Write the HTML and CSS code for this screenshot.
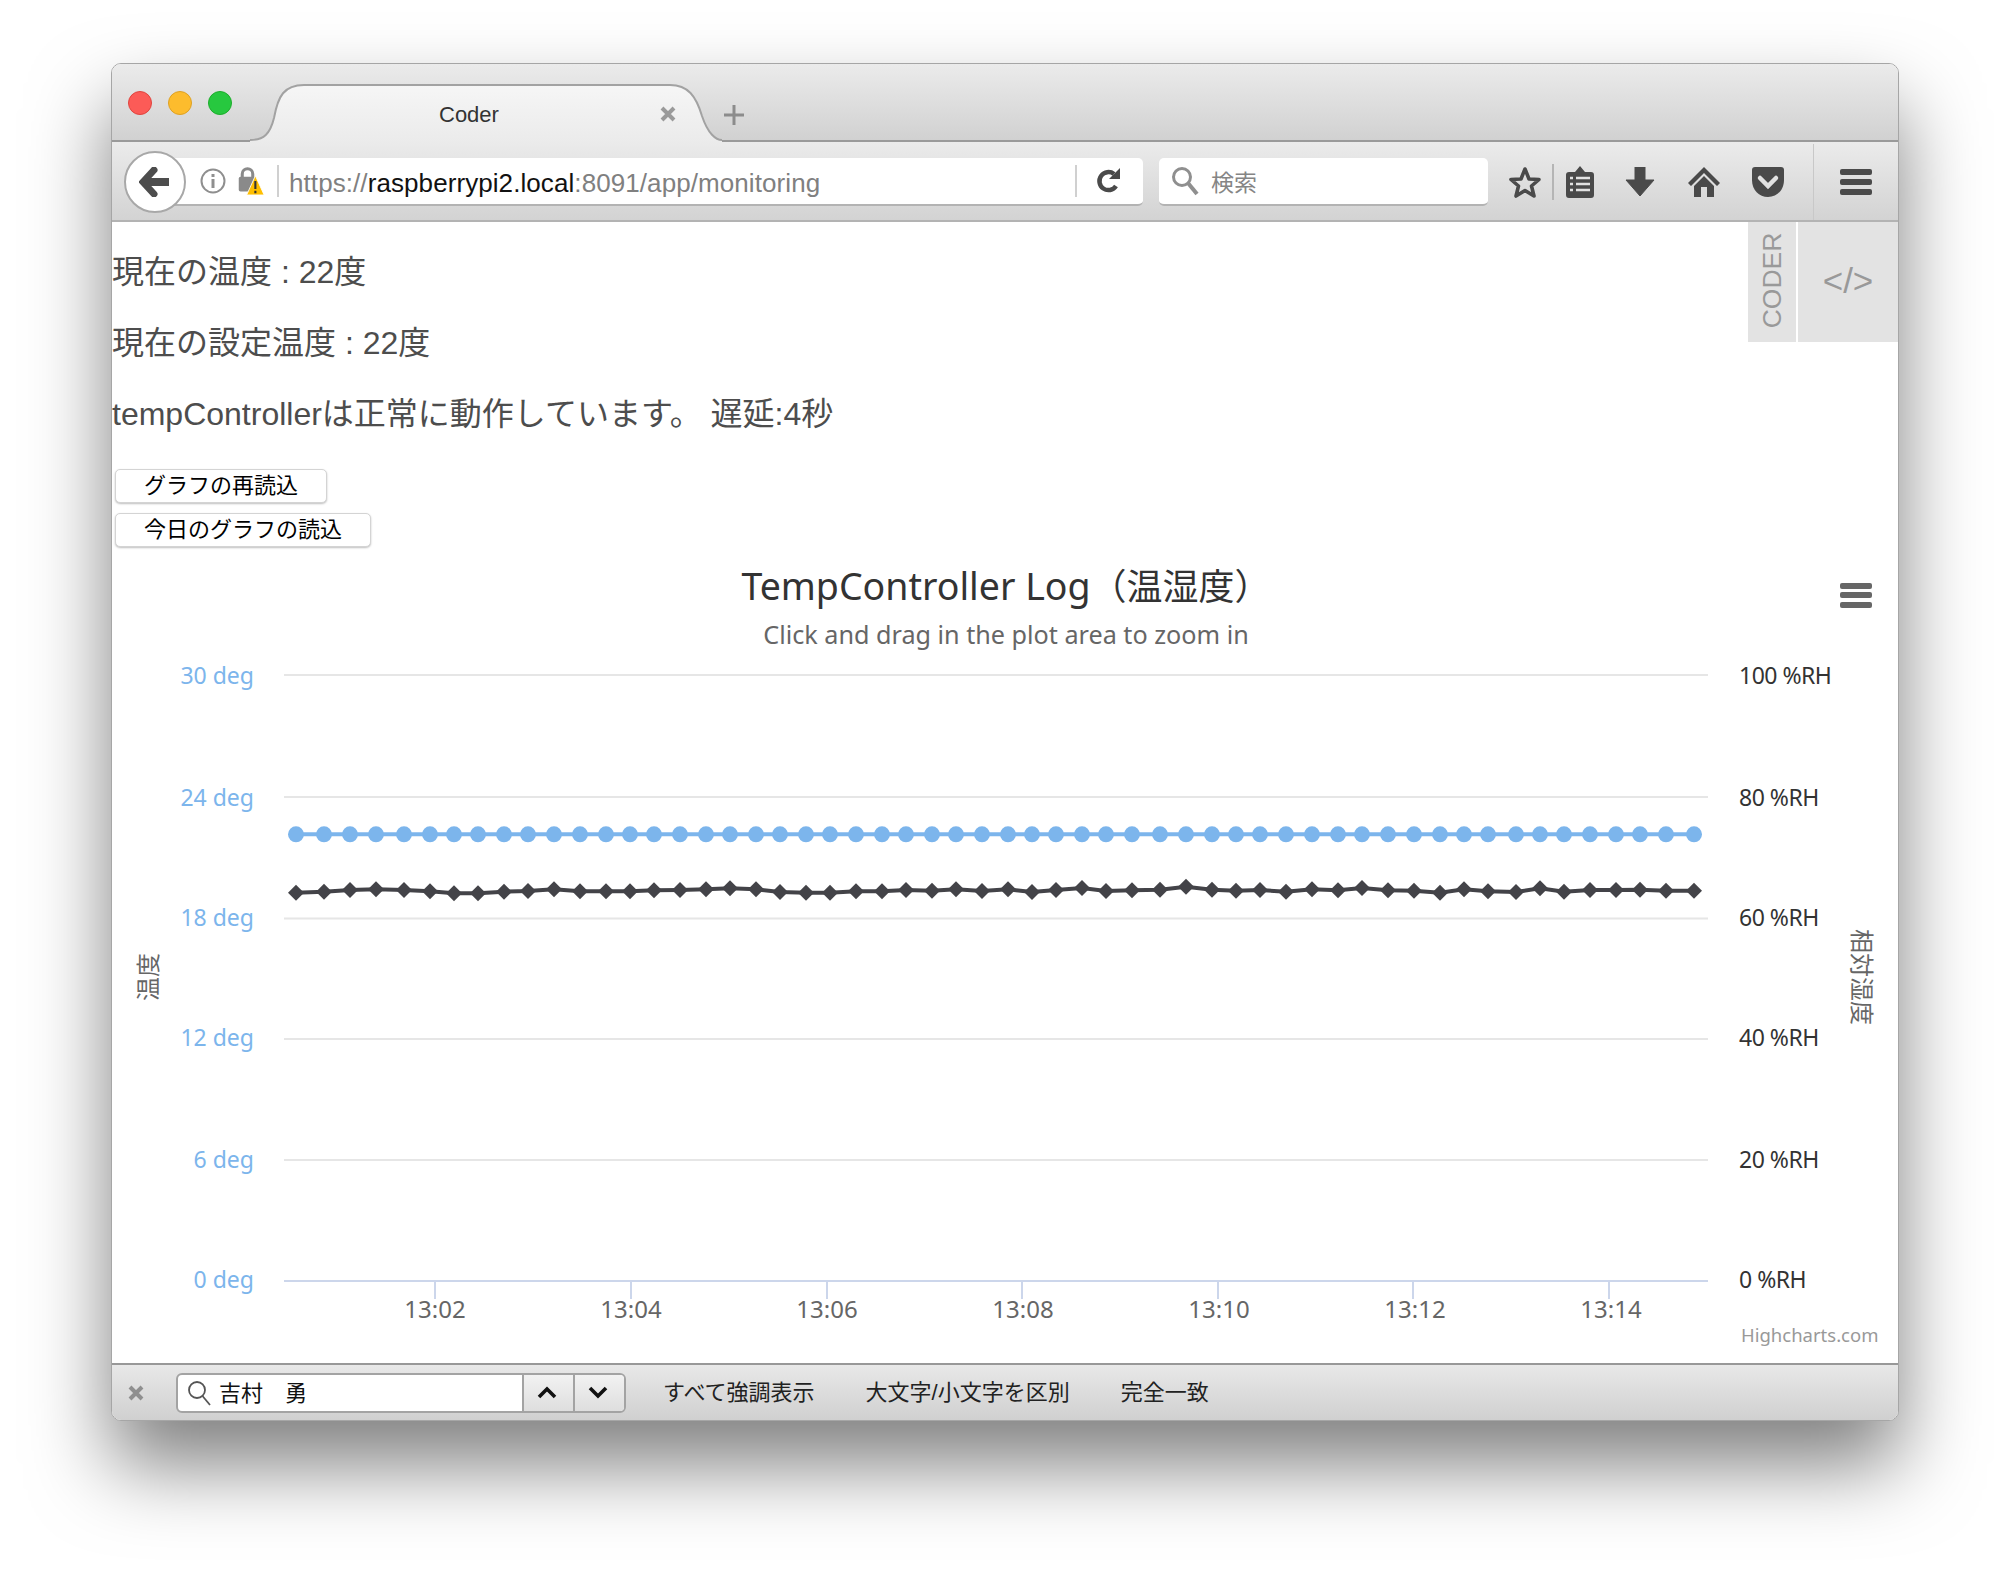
FILE: index.html
```html
<!DOCTYPE html>
<html lang="ja">
<head>
    <meta charset="UTF-8">
    <meta name="viewport" content="width=device-width, initial-scale=1.0">
    <title>Coder</title>
    <link rel="stylesheet" href="styles.css">
</head>
<body>
    <div class="window">
        <!-- Tab strip -->
        <div class="tabstrip">
            <div class="lights">
                <span class="light red"></span>
                <span class="light yellow"></span>
                <span class="light green"></span>
            </div>
            <div class="tab">
                <svg class="tab-shape" width="472" height="58" viewBox="0 0 472 58">
                    <defs>
                        <linearGradient id="tabFill" x1="0" y1="0" x2="0" y2="1">
                            <stop offset="0" stop-color="#f6f6f6"/>
                            <stop offset="1" stop-color="#ebebeb"/>
                        </linearGradient>
                    </defs>
                    <path d="M0 56 C14 56 20 50 24 34 C28 12 34 1 54 1 L420 1 C438 1 446 12 452 32 C458 50 466 56 472 56 L472 58 L0 58 Z" fill="url(#tabFill)"/>
                    <path d="M0 56 C14 56 20 50 24 34 C28 12 34 1 54 1 L420 1 C438 1 446 12 452 32 C458 50 466 56 472 56" fill="none" stroke="#a2a2a2" stroke-width="2"/>
                </svg>
                <span class="tab-title">Coder</span>
                <svg class="tab-close" width="16" height="16" viewBox="0 0 16 16">
                    <path d="M2 2 L14 14 M14 2 L2 14" stroke="#9a9a9a" stroke-width="4"/>
                </svg>
            </div>
            <svg class="new-tab" width="20" height="20" viewBox="0 0 20 20">
                <path d="M10 0 V20 M0 10 H20" stroke="#8c8c8c" stroke-width="3"/>
            </svg>
        </div>

        <!-- Navigation toolbar -->
        <div class="toolbar">
            <div class="back-button">
                <svg width="32" height="30" viewBox="0 0 32 30">
                    <path d="M15 3 L4 15 L15 27" fill="none" stroke="#4d4d4d" stroke-width="7" stroke-linecap="round"/>
                    <path d="M7 15 H30" stroke="#4d4d4d" stroke-width="8"/>
                </svg>
            </div>
            <div class="urlbar">
                <svg class="url-info" width="26" height="26" viewBox="0 0 26 26">
                    <circle cx="13" cy="13" r="11.5" fill="none" stroke="#8f8f8f" stroke-width="2"/>
                    <rect x="11.5" y="11" width="3" height="9" fill="#8f8f8f"/>
                    <rect x="11.5" y="6" width="3" height="3" fill="#8f8f8f"/>
                </svg>
                <svg class="url-lock" width="28" height="30" viewBox="0 0 32 34">
                    <path d="M6 13 V9 C6 1 18 1 18 9 V13" fill="none" stroke="#8a8a8a" stroke-width="3.5"/>
                    <rect x="2" y="12" width="20" height="17" rx="2" fill="#8a8a8a"/>
                    <path d="M21 11 L31 33 H11 Z" fill="#ffbf00" stroke="#fff" stroke-width="1"/>
                    <path d="M21 17 V26 M21 28 V31" stroke="#333" stroke-width="2.4"/>
                </svg>
                <span class="url-sep"></span>
                <span class="url-text">https://<b>raspberrypi2.local</b>:8091/app/monitoring</span>
                <span class="url-sep reload-sep"></span>
                <svg class="reload" width="26" height="26" viewBox="0 0 26 26">
                    <path d="M20 18 A9 9 0 1 1 18 6" fill="none" stroke="#4a4a4a" stroke-width="4.5"/>
                    <path d="M13 11 H24 V0 Z" fill="#4a4a4a"/>
                </svg>
            </div>
            <div class="searchbar">
                <svg width="28" height="30" viewBox="0 0 28 30">
                    <circle cx="11" cy="11" r="8.5" fill="none" stroke="#8f8f8f" stroke-width="3"/>
                    <path d="M17 17 L26 28" stroke="#8f8f8f" stroke-width="4"/>
                </svg>
                <span class="search-text">検索</span>
            </div>
            <div class="icon star-icon">
                <svg width="34" height="33" viewBox="0 0 34 33">
                    <path d="M17 3 L21 13 L31 13.5 L23.5 20 L26 30 L17 24.5 L8 30 L10.5 20 L3 13.5 L13 13 Z" fill="none" stroke="#4a4a4a" stroke-width="3.6" stroke-linejoin="round"/>
                </svg>
            </div>
            <span class="tool-sep"></span>
            <div class="icon clip-icon">
                <svg width="30" height="32" viewBox="0 0 30 32">
                    <path d="M15 0 L20 6 H26 Q29 6 29 9 V29 Q29 32 26 32 H4 Q1 32 1 29 V9 Q1 6 4 6 H10 Z" fill="#4a4a4a"/>
                    <path d="M5 12 H8 M11 12 H25 M5 18 H8 M11 18 H25 M5 24 H8 M11 24 H25" stroke="#e2e2e2" stroke-width="2.4"/>
                </svg>
            </div>
            <div class="icon dl-icon">
                <svg width="30" height="30" viewBox="0 0 30 30">
                    <path d="M10 0 H20 V13 H29 L15 29 L1 13 H10 Z" fill="#4a4a4a" stroke="#4a4a4a" stroke-width="1" stroke-linejoin="round"/>
                </svg>
            </div>
            <div class="icon home-icon">
                <svg width="34" height="30" viewBox="0 0 34 30">
                    <path d="M17 0 L33 16 L30 19 L17 6 L4 19 L1 16 Z" fill="#4a4a4a"/>
                    <path d="M17 9 L27 19 V30 H20 V20 H14 V30 H7 V19 Z" fill="#4a4a4a"/>
                </svg>
            </div>
            <div class="icon pocket-icon">
                <svg width="34" height="30" viewBox="0 0 34 30">
                    <path d="M4 0 H30 Q33 0 33 3 V13 C33 23 26 30 17 30 C8 30 1 23 1 13 V3 Q1 0 4 0 Z" fill="#4a4a4a"/>
                    <path d="M9 11 L17 19 L25 11" fill="none" stroke="#e2e2e2" stroke-width="4.5" stroke-linecap="round"/>
                </svg>
            </div>
            <span class="menu-sep"></span>
            <div class="icon menu-icon">
                <span class="menu-bar"></span>
                <span class="menu-bar"></span>
                <span class="menu-bar"></span>
            </div>
        </div>

        <!-- Page -->
        <div class="page">
            <div class="coder-tab">
                <div class="coder-label"><span>CODER</span></div>
                <div class="coder-code">&lt;/&gt;</div>
            </div>
            <p class="status first">現在の温度 : 22度</p>
            <p class="status">現在の設定温度 : 22度</p>
            <p class="status last">tempControllerは正常に動作しています。 遅延:4秒</p>
            <button class="graph-btn">グラフの再読込</button>
            <button class="graph-btn">今日のグラフの読込</button>

            <svg id="chart" class="chart" width="1786" height="806" viewBox="112 557 1786 806">
                <text class="chart-title" x="1006" y="600">TempController Log<tspan class="cjk">（温湿度）</tspan></text>
                <text class="chart-sub" x="1006" y="644">Click and drag in the plot area to zoom in</text>

                <rect class="chart-menu" x="1840" y="583" width="32" height="6" rx="2"/>
                <rect class="chart-menu" x="1840" y="592" width="32" height="6" rx="2"/>
                <rect class="chart-menu" x="1840" y="602" width="32" height="6" rx="2"/>

                <g class="grid">
                    <path d="M284 675 H1708"/>
                    <path d="M284 797 H1708"/>
                    <path d="M284 918.5 H1708"/>
                    <path d="M284 1039 H1708"/>
                    <path d="M284 1160 H1708"/>
                </g>
                <g class="axis">
                    <path d="M284 1281 H1708"/>
                    <path d="M435 1281 V1299"/>
                    <path d="M631 1281 V1299"/>
                    <path d="M827 1281 V1299"/>
                    <path d="M1022 1281 V1299"/>
                    <path d="M1218 1281 V1299"/>
                    <path d="M1413 1281 V1299"/>
                    <path d="M1609 1281 V1299"/>
                </g>

                <g class="label-left">
                    <text x="254" y="684">30 deg</text>
                    <text x="254" y="806">24 deg</text>
                    <text x="254" y="926">18 deg</text>
                    <text x="254" y="1046">12 deg</text>
                    <text x="254" y="1168">6 deg</text>
                    <text x="254" y="1288">0 deg</text>
                </g>
                <g class="label-right">
                    <text x="1739" y="684">100 %RH</text>
                    <text x="1739" y="806">80 %RH</text>
                    <text x="1739" y="926">60 %RH</text>
                    <text x="1739" y="1046">40 %RH</text>
                    <text x="1739" y="1168">20 %RH</text>
                    <text x="1739" y="1288">0 %RH</text>
                </g>
                <g class="label-x">
                    <text x="435" y="1318">13:02</text>
                    <text x="631" y="1318">13:04</text>
                    <text x="827" y="1318">13:06</text>
                    <text x="1023" y="1318">13:08</text>
                    <text x="1219" y="1318">13:10</text>
                    <text x="1415" y="1318">13:12</text>
                    <text x="1611" y="1318">13:14</text>
                </g>

                <text class="axis-title" transform="translate(157 977) rotate(-90)">温度</text>
                <text class="axis-title" transform="translate(1853 977) rotate(90)">相対湿度</text>
                <text class="credits" x="1741" y="1342">Highcharts.com</text>

                <g id="series"></g>
            </svg>
        </div>

        <!-- Find bar -->
        <div class="findbar">
            <svg class="find-close" width="16" height="16" viewBox="0 0 16 16">
                <path d="M2 2 L14 14 M14 2 L2 14" stroke="#8f8f8f" stroke-width="4"/>
            </svg>
            <div class="find-box">
                <svg width="24" height="26" viewBox="0 0 24 26">
                    <circle cx="10" cy="10" r="8" fill="none" stroke="#555" stroke-width="1.8"/>
                    <path d="M15.5 16 L23 25" stroke="#555" stroke-width="1.8"/>
                </svg>
                <span class="find-text">吉村　勇</span>
                <span class="find-btn">
                    <svg width="20" height="13" viewBox="0 0 20 13"><path d="M2 11 L10 3 L18 11" fill="none" stroke="#111" stroke-width="3.6"/></svg>
                </span>
                <span class="find-btn">
                    <svg width="20" height="13" viewBox="0 0 20 13"><path d="M2 2 L10 10 L18 2" fill="none" stroke="#111" stroke-width="3.6"/></svg>
                </span>
            </div>
            <span class="find-opt highlight">すべて強調表示</span>
            <span class="find-opt matchcase">大文字/小文字を区別</span>
            <span class="find-opt whole">完全一致</span>
        </div>
    </div>

    <script src="chart.js"></script>
</body>
</html>
```

FILE: styles.css
```css
body {
    margin: 0;
    height: 1580px;
    overflow: hidden;
    background-color: #fff;
    font-family: "Liberation Sans", "Noto Sans CJK JP", sans-serif;
    color: #4d4d4d;
}
.window {
    box-sizing: border-box;
    width: 1788px;
    height: 1358px;
    margin: 0 0 0 111px;
    position: relative;
    top: 63px;
    display: flex;
    flex-direction: column;
    border: 1px solid #a6a6a6;
    border-radius: 10px;
    box-shadow: 0 44px 80px rgba(0, 0, 0, 0.5);
    overflow: hidden;
    background-color: #fff;
}

/* tab strip */
.tabstrip {
    box-sizing: border-box;
    height: 78px;
    display: flex;
    background: linear-gradient(#ebebeb, #d1d1d1);
    border-bottom: 2px solid #9a9a9a;
    flex-shrink: 0;
}
.lights {
    display: flex;
    gap: 16px;
    padding: 27px 0 0 16px;
}
.light {
    box-sizing: border-box;
    width: 24px;
    height: 24px;
    border-radius: 50%;
}
.red {
    background-color: #fc5b57;
    border: 1px solid #e0443e;
}
.yellow {
    background-color: #fdbc2d;
    border: 1px solid #dea123;
}
.green {
    background-color: #27c83f;
    border: 1px solid #1dad2b;
}
.tab {
    position: relative;
    width: 472px;
    height: 58px;
    margin: 20px 0 0 18px;
    flex-shrink: 0;
}
.tab-shape {
    position: absolute;
    left: 0;
    top: 0;
}
.tab-title {
    position: absolute;
    left: 189px;
    top: 18px;
    font-size: 22px;
    line-height: 26px;
    color: #333;
}
.tab-close {
    position: absolute;
    left: 410px;
    top: 22px;
}
.new-tab {
    margin: 41px 0 0 2px;
}

/* toolbar */
.toolbar {
    box-sizing: border-box;
    height: 80px;
    display: flex;
    align-items: center;
    padding: 2px 0 0 12px;
    background: linear-gradient(#ebebeb, #d3d3d3);
    border-bottom: 2px solid #b3b3b3;
    flex-shrink: 0;
}
.back-button {
    box-sizing: border-box;
    width: 62px;
    height: 62px;
    margin-right: -31px;
    z-index: 1;
    display: flex;
    align-items: center;
    justify-content: center;
    background-color: #fff;
    border: 2px solid #a8a8a8;
    border-radius: 50%;
    flex-shrink: 0;
}
.urlbar {
    box-sizing: border-box;
    width: 988px;
    height: 48px;
    display: flex;
    align-items: center;
    padding-left: 45px;
    background-color: #fff;
    border-bottom: 2px solid #b3b3b3;
    border-radius: 0 5px 5px 0;
    flex-shrink: 0;
}
.url-lock {
    margin-left: 11px;
}
.url-sep {
    width: 2px;
    height: 32px;
    margin-left: 12px;
    background-color: #d0d0d0;
}
.url-text {
    flex: 1;
    margin-left: 10px;
    padding-top: 4px;
    font-size: 26px;
    letter-spacing: 0.08px;
    color: #808080;
    white-space: nowrap;
}
.url-text b {
    font-weight: normal;
    color: #111;
}
.reload-sep {
    margin-left: 0;
}
.reload {
    margin: 0 21px 0 19px;
}
.searchbar {
    box-sizing: border-box;
    width: 329px;
    height: 48px;
    margin-left: 16px;
    display: flex;
    align-items: center;
    padding-left: 12px;
    background-color: #fff;
    border-bottom: 2px solid #b3b3b3;
    border-radius: 5px;
    flex-shrink: 0;
}
.search-text {
    margin-left: 12px;
    font-size: 23px;
    color: #858585;
}
.icon {
    width: 40px;
    display: flex;
    align-items: center;
    justify-content: center;
    flex-shrink: 0;
}
.star-icon {
    margin-left: 17px;
}
.tool-sep {
    width: 2px;
    height: 36px;
    margin-left: 7px;
    background-color: #b5b5b5;
}
.clip-icon {
    margin-left: 6px;
}
.dl-icon {
    margin-left: 20px;
}
.home-icon,
.pocket-icon {
    margin-left: 24px;
}
.menu-sep {
    width: 1px;
    height: 76px;
    margin-left: 25px;
    background-color: #c8c8c8;
}
.menu-icon {
    margin-left: 22px;
    flex-direction: column;
    gap: 4px;
}
.menu-bar {
    width: 32px;
    height: 6px;
    border-radius: 2px;
    background-color: #4a4a4a;
}

/* page content */
.page {
    position: relative;
    flex: 1;
    background-color: #fff;
}
.status {
    margin: 33px 0;
    font-size: 32px;
    line-height: 38px;
}
.status.first {
    margin-top: 31px;
}
.status.last {
    margin-bottom: 36px;
}
.graph-btn {
    display: block;
    height: 34px;
    margin: 0 0 10px 3px;
    padding: 0 28px;
    font-family: inherit;
    font-size: 22px;
    line-height: 30px;
    color: #000;
    background-color: #fff;
    border: 1px solid #d4d4d4;
    border-radius: 5px;
    box-shadow: 0 1px 2px rgba(0, 0, 0, 0.25);
}
.coder-tab {
    position: absolute;
    top: 0;
    right: 0;
    display: flex;
    gap: 2px;
    height: 120px;
    color: #999;
}
.coder-label {
    box-sizing: border-box;
    width: 48px;
    padding: 0 0 4px 1px;
    display: flex;
    align-items: center;
    justify-content: center;
    background-color: #e3e3e3;
    font-size: 26.5px;
}
.coder-label span {
    transform: rotate(-90deg);
}
.coder-code {
    box-sizing: border-box;
    width: 100px;
    padding-bottom: 2px;
    display: flex;
    align-items: center;
    justify-content: center;
    background-color: #e3e3e3;
    font-size: 35px;
}

/* chart */
.chart {
    display: block;
    font-family: "Noto Sans", "Noto Sans CJK JP", sans-serif;
}
.chart-title {
    font-size: 37.5px;
    fill: #333;
    text-anchor: middle;
}
.chart-title .cjk {
    font-family: "Noto Sans CJK JP", sans-serif;
    font-size: 36px;
}
.chart-sub {
    font-size: 25.2px;
    fill: #666;
    text-anchor: middle;
}
.chart-menu {
    fill: #666;
}
.grid path {
    stroke: #e6e6e6;
    stroke-width: 2;
}
.axis path {
    stroke: #ccd6eb;
    stroke-width: 2;
}
.label-left text {
    font-size: 23px;
    fill: #7cb5ec;
    text-anchor: end;
}
.label-right text {
    font-size: 23px;
    letter-spacing: -0.5px;
    fill: #333;
}
.label-x text {
    font-size: 24px;
    fill: #666;
    text-anchor: middle;
}
.axis-title {
    font-family: "Noto Sans CJK JP", sans-serif;
    font-size: 24px;
    fill: #666;
    text-anchor: middle;
}
.credits {
    font-size: 18.5px;
    fill: #999;
}

/* find bar */
.findbar {
    box-sizing: border-box;
    height: 57px;
    display: flex;
    align-items: center;
    background: linear-gradient(#e8e8e8, #d0d0d0);
    border-top: 2px solid #989898;
    font-size: 22px;
    color: #222;
    flex-shrink: 0;
}
.find-close {
    margin-left: 16px;
}
.find-box {
    box-sizing: border-box;
    width: 450px;
    height: 40px;
    margin-left: 32px;
    display: flex;
    align-items: center;
    padding-left: 9px;
    background-color: #fff;
    border: 2px solid #a3a3a3;
    border-radius: 6px;
    overflow: hidden;
}
.find-text {
    flex: 1;
    margin-left: 8px;
    padding-bottom: 4px;
    color: #111;
}
.find-btn {
    box-sizing: border-box;
    width: 51px;
    height: 100%;
    display: flex;
    align-items: center;
    justify-content: center;
    padding-right: 3px;
    background: linear-gradient(#f2f2f2, #dedede);
    border-left: 2px solid #a3a3a3;
}
.find-opt {
    padding-bottom: 5px;
}
.highlight {
    margin-left: 37px;
}
.matchcase {
    margin-left: 51px;
}
.whole {
    margin-left: 51px;
}
```

FILE: chart.js
```js
// x position of every sample, shared by both series
var xs = [296, 324, 350, 376, 404, 430, 454, 478, 504, 528, 554, 580, 606, 630, 654, 680, 706, 730, 756,
    780, 806, 830, 856, 882, 906, 932, 956, 982, 1008, 1032, 1056, 1082, 1106, 1132, 1160, 1186, 1212, 1236,
    1260, 1286, 1312, 1338, 1362, 1388, 1414, 1440, 1464, 1488, 1516, 1540, 1564, 1590, 1616, 1640, 1666, 1694];

// humidity line (dark)
var ys = [892.7, 891.7, 890, 889.3, 890, 891.3, 893.3, 893.3, 891.7, 891, 889.3, 891.3, 891.3, 891.3, 890.3, 890, 889.3, 888.3, 889.3,
    892, 892.7, 892.7, 891.3, 891.3, 890, 890.7, 889.3, 891, 889.3, 892, 890, 888, 891, 890.3, 889.7, 886.7, 889.7, 890.7,
    890, 891.7, 889.3, 890.3, 888, 890.3, 890.7, 892.7, 889.3, 891.3, 892, 888.3, 891.7, 890, 890, 889.7, 890.7, 890.7];

var TEMP_Y = 834.3;
var NS = "http://www.w3.org/2000/svg";
var group = document.getElementById("series");

function add(tag, attrs) {
    var el = document.createElementNS(NS, tag);
    for (var k in attrs) {
        el.setAttribute(k, attrs[k]);
    }
    group.appendChild(el);
}

add("path", { d: "M" + xs[0] + " " + TEMP_Y + " H" + xs[xs.length - 1], stroke: "#7cb5ec", "stroke-width": 4, fill: "none" });
xs.forEach(function (x) {
    add("circle", { cx: x, cy: TEMP_Y, r: 8, fill: "#7cb5ec" });
});

var line = xs.map(function (x, i) { return x + " " + ys[i]; }).join(" L");
add("path", { d: "M" + line, stroke: "#434348", "stroke-width": 4, fill: "none" });
xs.forEach(function (x, i) {
    var y = ys[i];
    add("path", { d: "M" + x + " " + (y - 8) + " L" + (x + 8) + " " + y + " L" + x + " " + (y + 8) + " L" + (x - 8) + " " + y + " Z", fill: "#434348" });
});
```
